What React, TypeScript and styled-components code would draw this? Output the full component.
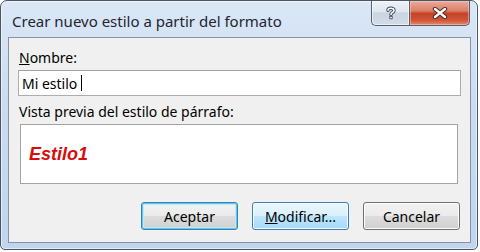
import styled, { createGlobalStyle } from "styled-components"

const GlobalStyle = createGlobalStyle`
  html, body {
    margin: 0;
    padding: 0;
    background: #ffffff;
  }
  * {
    box-sizing: border-box;
  }
`

const uiFont = `"Noto Sans", "Open Sans", "DejaVu Sans", sans-serif`

type ButtonVariant = "default" | "hover" | "normal"

const App: React.FC = () => (
  <>
    <GlobalStyle />
    <Window role="dialog" aria-label="Crear nuevo estilo a partir del formato">
      <TitleBar>
        <Title>Crear nuevo estilo a partir del formato</Title>
        <CaptionButtons>
          <HelpButton aria-label="Ayuda">
            <svg width="10" height="14" viewBox="0 0 10 14">
              <path
                d="M2 4.2 C2 1.8 8 1.4 8 4.4 C8 6.2 5 6.4 5 8.4"
                fill="none"
                stroke="#3a4656"
                strokeWidth="3.4"
                strokeLinecap="round"
              />
              <path
                d="M2 4.2 C2 1.8 8 1.4 8 4.4 C8 6.2 5 6.4 5 8.4"
                fill="none"
                stroke="#ffffff"
                strokeWidth="1.6"
                strokeLinecap="round"
              />
              <rect x="3.4" y="10" width="3.2" height="3.2" rx="0.6" fill="#3a4656" />
              <rect x="4.2" y="10.8" width="1.6" height="1.6" fill="#ffffff" />
            </svg>
          </HelpButton>
          <CloseButton aria-label="Cerrar">
            <svg width="16" height="12" viewBox="0 0 16 12">
              <path d="M3 2 L13 10 M13 2 L3 10" stroke="#4a2a26" strokeWidth="4.4" strokeLinecap="round" />
              <path d="M3 2 L13 10 M13 2 L3 10" stroke="#ffffff" strokeWidth="2.4" strokeLinecap="round" />
            </svg>
          </CloseButton>
        </CaptionButtons>
      </TitleBar>
      <Client>
        <FieldLabel>
          <u>N</u>ombre:
        </FieldLabel>
        <NameInput>
          Mi estilo<Caret />
        </NameInput>
        <FieldLabel $spaced>Vista previa del estilo de párrafo:</FieldLabel>
        <Preview>
          <PreviewText>Estilo1</PreviewText>
        </Preview>
        <ButtonRow>
          <DialogButton $variant="default">Aceptar</DialogButton>
          <DialogButton $variant="hover">
            <u>M</u>odificar...
          </DialogButton>
          <DialogButton $variant="normal">Cancelar</DialogButton>
        </ButtonRow>
      </Client>
    </Window>
  </>
)

const Window = styled.div`
  width: 478px;
  height: 250px;
  display: flex;
  flex-direction: column;
  border: 1px solid #4a5666;
  border-radius: 7px 7px 5px 5px;
  background: linear-gradient(to bottom, #dbe7f6 0%, #cbdcf1 40%, #c1d5ee 100%);
  box-shadow: inset 0 0 0 1px rgba(255, 255, 255, 0.55);
  font-family: ${uiFont};
`

const TitleBar = styled.div`
  height: 36px;
  display: flex;
  align-items: flex-start;
  justify-content: space-between;
  padding: 0 7px 0 11px;
`

const Title = styled.div`
  margin-top: 10px;
  font-size: 15px;
  line-height: 20px;
  color: #1e2530;
  white-space: nowrap;
`

const CaptionButtons = styled.div`
  display: flex;
  height: 25px;
`

const captionBase = `
  display: flex;
  align-items: center;
  justify-content: center;
  height: 25px;
  padding: 0;
  border: 1px solid #58606c;
  border-top: none;
`

const HelpButton = styled.button`
  ${captionBase}
  width: 38px;
  border-right: none;
  border-radius: 0 0 0 5px;
  background: linear-gradient(
    to bottom,
    #eef2f7 0%,
    #dfe6ef 45%,
    #c9d4e2 50%,
    #d3dde9 100%
  );
  box-shadow: inset 0 0 0 1px rgba(255, 255, 255, 0.6);
`

const CloseButton = styled.button`
  ${captionBase}
  width: 61px;
  border-radius: 0 0 5px 0;
  background: linear-gradient(
    to bottom,
    #e9ab9c 0%,
    #dc8168 40%,
    #c7432a 52%,
    #cf5438 80%,
    #e28b6e 100%
  );
  box-shadow: inset 0 0 0 1px rgba(255, 220, 210, 0.45);
`

const Client = styled.div`
  flex: 1;
  margin: 0 6px 6px 7px;
  border: 1px solid #8593a6;
  background: #f0f0f0;
  display: flex;
  flex-direction: column;
  padding: 10px 9px 0 9px;
`

const FieldLabel = styled.div<{ $spaced?: boolean }>`
  font-size: 14px;
  line-height: 19px;
  color: #000000;
  margin-top: ${({ $spaced }) => ($spaced ? "6px" : "0")};
  margin-bottom: 3px;
  padding-left: 1px;
`

const NameInput = styled.div`
  width: 443px;
  height: 26px;
  border: 1px solid #abadb3;
  border-top-color: #a0a2a8;
  background: #ffffff;
  display: flex;
  align-items: center;
  padding-left: 3px;
  font-size: 14px;
  white-space: pre;
`

const Caret = styled.span`
  display: inline-block;
  width: 1px;
  height: 16px;
  background: #000000;
  margin-left: 4px;
`

const Preview = styled.div`
  width: 438px;
  height: 60px;
  margin-left: 2px;
  border: 1px solid #a3a3a3;
  background: #ffffff;
  display: flex;
  align-items: center;
  padding-left: 8px;
`

const PreviewText = styled.span`
  font-family: "Liberation Sans", Arial, sans-serif;
  font-size: 18px;
  font-weight: bold;
  font-style: italic;
  color: #d80c0c;
`

const ButtonRow = styled.div`
  display: flex;
  justify-content: flex-end;
  gap: 14px;
  margin-top: 18px;
  padding-right: 1px;
`

const variantStyles: Record<ButtonVariant, string> = {
  default: `
    border-color: #3c7fb1;
    background: linear-gradient(to bottom, #f2f2f2 0%, #ebebeb 50%, #dddddd 51%, #cfcfcf 100%);
    box-shadow: inset 0 0 0 1px #5fc8ee, inset 0 0 0 2px #bfe9f9;
  `,
  hover: `
    border-color: #3c7fb1;
    background: linear-gradient(to bottom, #eaf6fd 0%, #d9f0fc 50%, #bee6fd 51%, #a7d9f5 100%);
    box-shadow: inset 0 0 0 1px #f4fbff;
  `,
  normal: `
    border-color: #707070;
    background: linear-gradient(to bottom, #f2f2f2 0%, #ebebeb 50%, #dddddd 51%, #cfcfcf 100%);
    box-shadow: inset 0 0 0 1px #fcfcfc;
  `,
}

const DialogButton = styled.button<{ $variant: ButtonVariant }>`
  width: 97px;
  height: 28px;
  border: 1px solid;
  border-radius: 3px;
  font-family: ${uiFont};
  font-size: 14px;
  color: #000000;
  padding: 0;
  ${({ $variant }) => variantStyles[$variant]}
`

export default App
